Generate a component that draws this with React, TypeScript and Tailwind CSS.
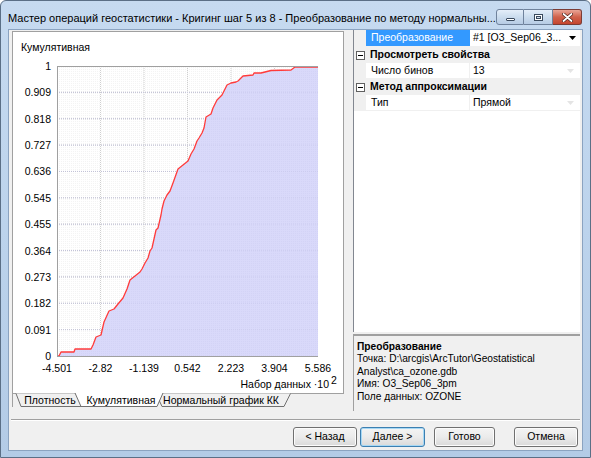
import React from "react";

const curve: [number, number][] = [
  [56, 355], [58, 355], [60, 351], [73, 351], [74, 348], [90, 348], [92, 344], [95, 336],
  [100, 334], [103, 321], [108, 310], [113, 308], [117, 303], [122, 297], [126, 288],
  [129, 279], [134, 275], [139, 271], [141, 268], [144, 262], [147, 257], [149, 250],
  [151, 247], [153, 238], [155, 229], [157, 227], [160, 214], [161, 208], [163, 200],
  [166, 194], [169, 190], [172, 182], [177, 168], [182, 164], [187, 160], [190, 153],
  [193, 148], [196, 140], [198, 137], [201, 132], [203, 127], [205, 116], [210, 113],
  [212, 107], [214, 103], [216, 99], [221, 94], [224, 88], [226, 84], [230, 82],
  [235, 81], [237, 80], [240, 77], [242, 75], [252, 74], [253, 72], [260, 72],
  [270, 69.5], [290, 69], [294, 66], [317, 66],
];

const yLabels = ["0", "0.091", "0.182", "0.273", "0.364", "0.455", "0.545", "0.636", "0.727", "0.818", "0.909", "1"];
const xLabels = ["-4.501", "-2.82", "-1.139", "0.542", "2.223", "3.904", "5.586"];

const Chart = () => {
  const line = curve.map((p) => p.join(",")).join(" ");
  const area = line + " 317,355";
  const rowH = 290 / 11;
  return (
    <svg width="330" height="361" viewBox="12 31 330 361" className="block">
      <defs>
        <pattern id="dots" width="2" height="2" patternUnits="userSpaceOnUse">
          <rect x="0" y="0" width="1" height="1" fill="#f4f4f4" />
        </pattern>
        <pattern id="fillDots" width="2" height="2" patternUnits="userSpaceOnUse">
          <rect width="2" height="2" fill="#d9d9fa" />
          <rect x="0" y="0" width="1" height="1" fill="#d3d3f6" />
        </pattern>
      </defs>
      <text x="20" y="50" fontSize="10.5" fill="#000">Кумулятивная</text>
      <rect x="56" y="65" width="261" height="290" fill="#ffffff" />
      <rect x="56" y="65" width="261" height="290" fill="url(#dots)" />
      {Array.from({ length: 10 }).map((_, i) => (
        <line key={"h" + i} x1="56" x2="317" y1={355 - (i + 1) * rowH} y2={355 - (i + 1) * rowH}
          stroke="#bcbcbc" strokeDasharray="1 1" />
      ))}
      {Array.from({ length: 5 }).map((_, j) => (
        <line key={"v" + j} x1={56 + (j + 1) * 43.5} x2={56 + (j + 1) * 43.5} y1="65" y2="355"
          stroke="#cfcfcf" strokeDasharray="1 1" />
      ))}
      <polygon points={area} fill="url(#fillDots)" />
      {Array.from({ length: 10 }).map((_, i) => (
        <line key={"h2" + i} x1="56" x2="317" y1={355 - (i + 1) * rowH} y2={355 - (i + 1) * rowH}
          stroke="#c8c8ec" strokeDasharray="1 1" opacity="0.6" />
      ))}
      <polyline points={line} fill="none" stroke="#ff3b3b" strokeWidth="1.3" strokeLinejoin="round" />
      <line x1="56.5" x2="56.5" y1="65" y2="355.5" stroke="#a0a0a0" />
      <line x1="56" x2="317" y1="65.5" y2="65.5" stroke="#a0a0a0" />
      <line x1="56" x2="317" y1="355.5" y2="355.5" stroke="#a0a0a0" />
      {yLabels.map((l, i) => (
        <text key={l} x="50" y={355 - i * rowH + 4} fontSize="10.5" textAnchor="end" fill="#000">{l}</text>
      ))}
      {xLabels.map((l, j) => (
        <text key={l} x={56 + j * 43.5} y="371" fontSize="10.5" textAnchor="middle" fill="#000">{l}</text>
      ))}
      <text x="328" y="387" fontSize="10.5" textAnchor="end" fill="#000">Набор данных ·10</text>
      <text x="330" y="383" fontSize="10.5" fill="#000">2</text>
    </svg>
  );
};

const Tabs = () => (
  <div className="relative h-[14px] border-l border-[#a0a0a0]">
    <svg width="332" height="14" viewBox="11 392 332 14" className="absolute left-[-1px] top-0">
      <line x1="11" x2="343" y1="392.5" y2="392.5" stroke="#a0a0a0" />
      <polyline points="155,392.5 161,405.5 283,405.5 289.5,392.5" fill="#f0f0f0" stroke="#707070" />
      <polyline points="15,392.5 20,405.5 80,405.5 85,392.5" fill="#f0f0f0" stroke="#707070" />
      <polygon points="74,391 80,405.5 156,405.5 162,391" fill="#ffffff" />
      <polyline points="74,392 80,405.5 156,405.5 162,392" fill="none" stroke="#707070" />
    </svg>
    <div className="relative flex pl-[5px] text-[10.5px] leading-[14px] text-black">
      <span className="w-[64px] text-center">Плотность</span>
      <span className="w-[78px] text-center">Кумулятивная</span>
      <span className="w-[122px] text-center">Нормальный график КК</span>
    </div>
  </div>
);

const MinusBox = () => (
  <svg width="9" height="9" viewBox="0 0 9 9" className="shrink-0">
    <rect x="0.5" y="0.5" width="8" height="8" fill="#ffffff" stroke="#606060" />
    <line x1="2" x2="7" y1="4.5" y2="4.5" stroke="#000" />
  </svg>
);

const FaintArrow = () => (
  <svg width="7" height="4" viewBox="0 0 7 4" className="mr-[6px] shrink-0">
    <polygon points="0,0 7,0 3.5,4" fill="#e4e4e4" />
  </svg>
);

const Category = ({ title }: { title: string }) => (
  <div className="flex h-[16px] items-center bg-[#f0f0f0] pl-[2px]">
    <MinusBox />
    <span className="ml-[5px] font-bold">{title}</span>
  </div>
);

const PropRow = ({ name, value }: { name: string; value: string }) => (
  <div className="flex h-[16px] border-b border-[#f0f0f0]">
    <div className="w-[12px] bg-[#f0f0f0]" />
    <div className="flex w-[104px] items-center border-r border-[#f0f0f0] pl-[5px]">{name}</div>
    <div className="flex flex-1 items-center pl-[3px]">
      <span className="flex-1">{value}</span>
      <FaintArrow />
    </div>
  </div>
);

const PropertyGrid = () => (
  <div className="flex h-[302px] flex-col border-l border-[#828790] bg-white">
    <div className="flex h-[17px] border-b border-[#f0f0f0]">
      <div className="w-[12px] bg-[#f0f0f0]" />
      <div className="flex w-[104px] items-center bg-[#3399ff] pl-[5px] text-white">Преобразование</div>
      <div className="flex flex-1 items-center pl-[3px]">
        <span className="flex-1 whitespace-nowrap">#1 [O3_Sep06_3...</span>
        <div className="mr-[1px] flex h-[15px] w-[14px] items-center justify-center">
          <svg width="7" height="4" viewBox="0 0 7 4">
            <polygon points="0,0 7,0 3.5,4" fill="#000" />
          </svg>
        </div>
      </div>
    </div>
    <Category title="Просмотреть свойства" />
    <PropRow name="Число бинов" value="13" />
    <Category title="Метод аппроксимации" />
    <PropRow name="Тип" value="Прямой" />
  </div>
);

const Description = () => (
  <div className="mt-[2px] h-[77px] border-t-2 border-l border-t-[#a0a0a0] border-l-[#a0a0a0] bg-[#f0f0f0] pl-[3px] pt-[5px] text-[10.2px] leading-[12.4px]">
    <div className="font-bold">Преобразование</div>
    <div>Точка: D:\arcgis\ArcTutor\Geostatistical</div>
    <div>Analyst\ca_ozone.gdb</div>
    <div>Имя: O3_Sep06_3pm</div>
    <div>Поле данных: OZONE</div>
  </div>
);

const WinButton = ({ label, focused, className }: { label: string; focused?: boolean; className: string }) => (
  <button
    className={
      "h-[20px] rounded-[3px] border bg-gradient-to-b from-[#f4f4f4] via-[#ebebeb] to-[#d9d9d9] text-[10.5px] text-black " +
      (focused ? "border-[#3c7fb1] shadow-[inset_0_0_0_1px_#a6d8f5] " : "border-[#707070] shadow-[inset_0_0_0_1px_#fcfcfc] ") +
      className
    }
  >
    {label}
  </button>
);

const TitleButtons = () => (
  <div className="ml-auto mr-[8px] mt-[8px] flex">
    <div className="flex h-[16px] w-[28px] items-center justify-center rounded-l-[3px] border border-[#6f829c] bg-gradient-to-b from-[#e4eef9] via-[#cbdcee] to-[#b7cce5]">
      <div className="mt-[5px] h-[3px] w-[9px] rounded-[1px] border border-[#3a4a5e] bg-white" />
    </div>
    <div className="flex h-[16px] w-[29px] items-center justify-center border-y border-r border-[#6f829c] bg-gradient-to-b from-[#e4eef9] via-[#cbdcee] to-[#b7cce5]">
      <div className="h-[7px] w-[9px] border border-[#3a4a5e] bg-white">
        <div className="m-[1px] h-[3px] border border-[#3a4a5e] bg-[#cfdcec]" />
      </div>
    </div>
    <div className="flex h-[16px] w-[29px] items-center justify-center rounded-r-[3px] border-y border-r border-[#7b3c35] bg-gradient-to-b from-[#e8a597] via-[#d0624c] to-[#c4452f]">
      <svg width="11" height="9" viewBox="0 0 11 9">
        <path d="M1.5 1 L9.5 8 M9.5 1 L1.5 8" stroke="#4a2019" strokeWidth="3.2" strokeLinecap="round" />
        <path d="M1.5 1 L9.5 8 M9.5 1 L1.5 8" stroke="#ffffff" strokeWidth="1.8" strokeLinecap="round" />
      </svg>
    </div>
  </div>
);

export default function App() {
  return (
    <div className="flex h-[458px] w-[591px] flex-col overflow-hidden rounded-t-[6px] border border-[#5b6f86] bg-gradient-to-b from-[#c6daf0] via-[#bcd3ec] to-[#b3cbe6] font-['Liberation_Sans',Arial,sans-serif] text-[10.5px] text-black">
      <div className="flex h-[28px] shrink-0 items-start">
        <span className="ml-[7px] mt-[10px] whitespace-nowrap text-[11px] leading-[14px] text-black">
          Мастер операций геостатистики - Кригинг шаг 5 из 8 - Преобразование по методу нормальны...
        </span>
        <TitleButtons />
      </div>
      <div className="mx-[7px] mb-[6px] flex flex-1 flex-col border border-[#8ba3c0] bg-[#f0f0f0]">
        <div className="flex h-[381px]">
          <div className="ml-[3px] flex w-[332px] flex-col">
            <div className="mt-[1px] h-[362px] border-x border-t border-[#a0a0a0] bg-white">
              <Chart />
            </div>
            <Tabs />
          </div>
          <div className="ml-[9px] flex w-[227px] flex-col">
            <PropertyGrid />
            <Description />
          </div>
        </div>
        <div className="mx-[2px] mt-[8px] border-t border-b border-t-[#a0a0a0] border-b-white" />
        <div className="mt-[6px] flex">
          <WinButton label="< Назад" className="ml-[284px] w-[64px]" />
          <WinButton label="Далее >" focused className="ml-[3px] w-[65px]" />
          <WinButton label="Готово" className="ml-[9px] w-[61px]" />
          <WinButton label="Отмена" className="ml-[19px] w-[64px]" />
        </div>
      </div>
    </div>
  );
}
